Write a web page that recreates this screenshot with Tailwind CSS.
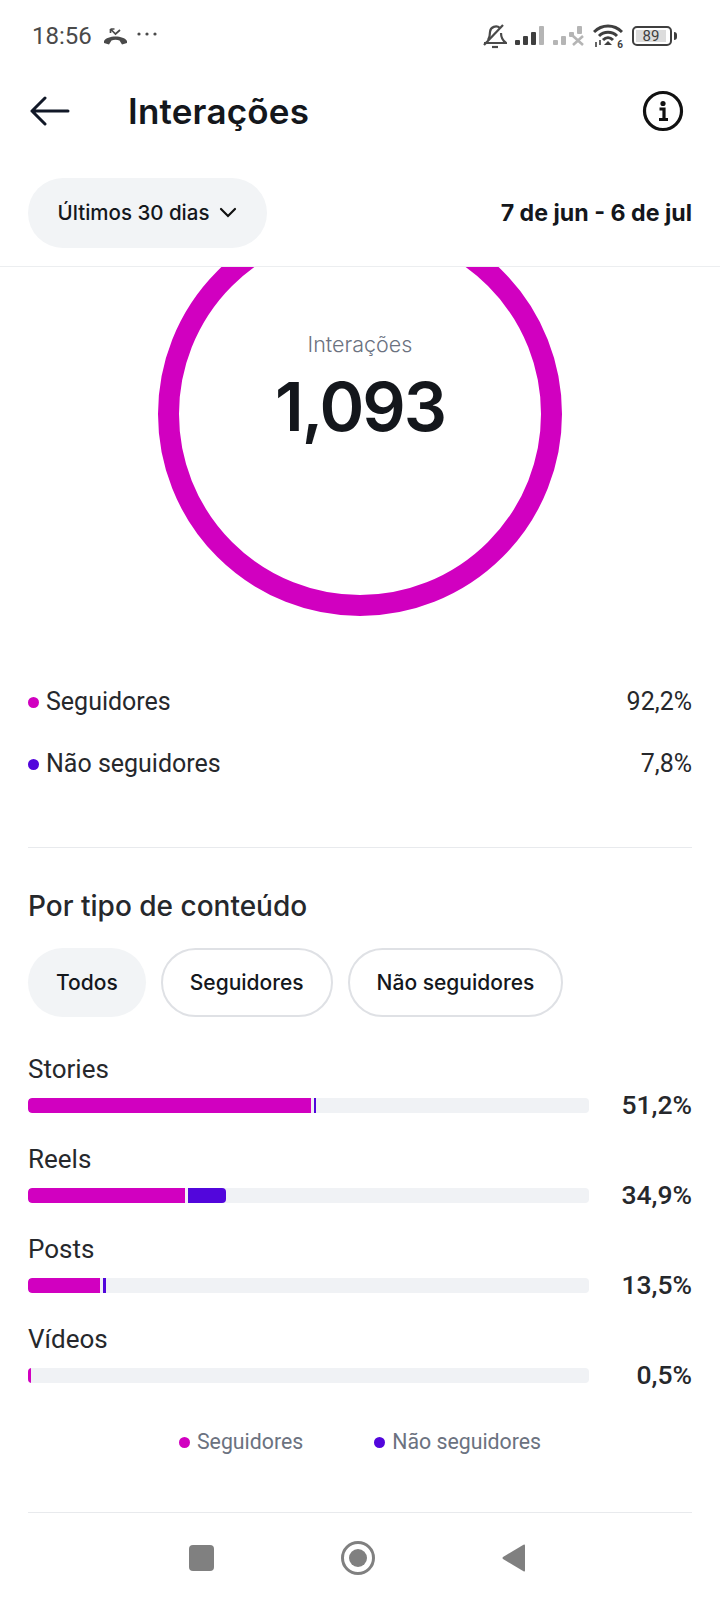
<!DOCTYPE html>
<html lang="en">
  <head>
    <meta charset="UTF-8">
    <title>Interações</title>
    <meta name="viewport" content="width=device-width, initial-scale=1.0">
    <script src="https://cdn.jsdelivr.net/npm/@tailwindcss/browser@4"></script>
  </head>
  <body class="bg-white">
    <div class="w-[720px] h-[1600px] overflow-hidden flex flex-col font-['Roboto',sans-serif] text-[#26282c]">
      <!-- status bar -->
      <div class="h-[72px] shrink-0 flex items-center justify-between pl-8 pr-[43px] text-[#4a4a4a]">
        <div class="flex items-center">
          <span class="text-[24px] leading-none">18:56</span>
          <svg class="ml-[12px]" width="23" height="17" viewBox="0 0 23 17" fill="#4a4a4a"><path d="M0 13C3 7 20 7 23 13L23 15 18 16.500 15.500 12.500C13 11.500 10 11.500 7.500 12.500L5 16.500 0 15Z"/><path d="M6.500 1L11.500 6 16 2M6.500 1V5M6.500 1H10.500" fill="none" stroke="#4a4a4a" stroke-width="1.700"/></svg>
          <svg class="ml-[10px] -mt-1" width="20" height="4" viewBox="0 0 20 4" fill="#4a4a4a"><circle cx="2" cy="2" r="1.600"/><circle cx="10" cy="2" r="1.600"/><circle cx="18" cy="2" r="1.600"/></svg>
        </div>
        <div class="flex items-center gap-[8px]">
          <svg width="24" height="26" viewBox="0 0 24 26" fill="none" stroke="#4a4a4a" stroke-width="2.200"><path d="M5 17C7 14 7 12 7 9A6 6 0 0 1 17 5M18 10C18 14 19 17 23 20H1"/><path d="M1 22L20 2"/><path d="M9 24h6"/></svg>
          <svg width="30" height="20" viewBox="0 0 30 20" fill="#3f3f3f"><rect x="0" y="14" width="5" height="5" rx="1"/><rect x="8" y="10" width="5" height="9" rx="1"/><rect x="16" y="6" width="5" height="13" rx="1"/><rect x="24" y="0" width="5" height="19" rx="1" fill="#b5b5b5"/></svg>
          <svg width="32" height="20" viewBox="0 0 32 20" fill="#b5b5b5"><rect x="0" y="14" width="5" height="5" rx="1"/><rect x="8" y="10" width="5" height="9" rx="1"/><rect x="16" y="6" width="5" height="5" rx="1"/><rect x="24" y="0" width="5" height="8" rx="1"/><path d="M20 10l10 9M30 10l-10 9" stroke="#b5b5b5" stroke-width="2.600"/></svg>
          <div class="relative w-[30px] h-[24px]">
            <svg width="30" height="24" viewBox="0 0 30 24" fill="none" stroke="#3f3f3f" stroke-width="3"><path d="M1 8C9 0 21 0 29 8M6 12C11 7 19 7 24 12M10 16C13 13 17 13 20 16"/><path d="M15 17l4 4h-8z" fill="#3f3f3f" stroke="none"/><path d="M3 18v5M7 16v5" stroke-width="1.600"/></svg>
            <span class="absolute right-0 bottom-[-2px] text-[10px] leading-none font-bold text-[#3f3f3f]">6</span>
          </div>
          <div class="flex items-center ml-[1px]">
            <div class="w-[40px] h-[20px] border-2 border-[#3f3f3f] rounded-[5px] p-[2px]">
              <div class="bg-[#dcdcdc] h-full w-[30px] flex items-center justify-center text-[15px] leading-none text-[#3f3f3f]">89</div>
            </div>
            <div class="w-[3px] h-[8px] bg-[#3f3f3f] ml-[2px] rounded-r-sm"></div>
          </div>
        </div>
      </div>
      <!-- header -->
      <div class="h-[78px] shrink-0 flex items-center justify-between pl-[30px] pr-[36px]">
        <div class="flex items-center">
          <svg width="40" height="30" viewBox="0 0 40 30" fill="none" stroke="#111827" stroke-width="3" stroke-linecap="round" stroke-linejoin="round"><path d="M2 15h36M15 2L2 15l13 13"/></svg>
          <h1 class="ml-[58px] text-[35px] tracking-[0.2px] font-semibold font-['Inter',sans-serif] leading-none text-[#14171c]">Interações</h1>
        </div>
        <svg width="42" height="42" viewBox="0 0 42 42" fill="none"><circle cx="21" cy="21" r="18.500" stroke="#111" stroke-width="3.200"/><circle cx="21" cy="13.500" r="2.600" fill="#111"/><path d="M17.500 19h4.500v10M17 29.500h9" stroke="#111" stroke-width="3.200"/></svg>
      </div>
      <!-- date filter -->
      <div class="h-[117px] shrink-0 flex items-start justify-between px-7 pt-[28px] border-b border-[#eceef0]">
        <button class="h-[70px] w-[239px] rounded-full bg-[#f2f4f6] flex items-center justify-center gap-[10px] text-[20.500px] font-['Inter',sans-serif] font-medium text-[#14171c]">
          <span>Últimos 30 dias</span>
          <svg width="18" height="12" viewBox="0 0 18 12" fill="none" stroke="#111" stroke-width="2.200" stroke-linecap="round"><path d="M2 2l7 7 7-7"/></svg>
        </button>
        <span class="mt-[21px] text-[23.200px] font-bold font-['Inter',sans-serif] leading-[28px] text-[#14171c]">7 de jun - 6 de jul</span>
      </div>
      <!-- donut -->
      <div class="relative h-[350px] shrink-0">
        <svg width="720" height="350" viewBox="0 267 720 350" fill="none"><circle cx="360" cy="414" r="191.500" stroke="#d100c0" stroke-width="21"/></svg>
        <div class="absolute inset-x-0 top-[62px] flex flex-col items-center">
          <span class="text-[21.500px] leading-[30px] font-['Inter',sans-serif] font-light text-[#6b7280]">Interações</span>
          <span class="mt-[7px] text-[68px] tracking-[-2px] leading-[80px] font-semibold font-['Inter',sans-serif] text-[#14171c]">1,093</span>
        </div>
      </div>
      <!-- followers split -->
      <div class="mx-7 pt-[54px] h-[231px] border-b border-[#e8eaed] shrink-0 text-[25px]">
        <div class="flex items-center justify-between h-[62px]">
          <div class="flex items-center gap-[7px]"><span class="w-[11px] h-[11px] rounded-full bg-[#d100c0]"></span>Seguidores</div>
          <span>92,2%</span>
        </div>
        <div class="flex items-center justify-between h-[62px]">
          <div class="flex items-center gap-[7px]"><span class="w-[11px] h-[11px] rounded-full bg-[#5206dc]"></span>Não seguidores</div>
          <span>7,8%</span>
        </div>
      </div>
      <!-- content type -->
      <div class="mx-7 shrink-0 h-[665px] flex flex-col border-b border-[#e8eaed]">
        <h2 class="mt-[40px] text-[28px] leading-[36px] font-medium font-['Inter',sans-serif]">Por tipo de conteúdo</h2>
        <div class="flex gap-[15px] mt-[24px] text-[21px] font-medium font-['Inter',sans-serif] text-[#14171c]">
          <button class="h-[69px] px-[28px] rounded-full bg-[#f2f4f6]">Todos</button>
          <button class="h-[69px] px-[27px] rounded-full border-2 border-[#dfe1e5]">Seguidores</button>
          <button class="h-[69px] px-[27px] rounded-full border-2 border-[#dfe1e5]">Não seguidores</button>
        </div>
        <div class="mt-[36px] flex flex-col gap-[26px]">
          <div class="h-[64px]">
            <div class="text-[26px] leading-[32px]">Stories</div>
            <div class="flex items-start justify-between">
              <div class="w-[561px] h-[15px] mt-[13px] rounded-[4px] bg-[#f0f2f5] flex overflow-hidden">
                <div class="w-[283px] bg-[#d100c0] rounded-l-[4px]"></div>
                <div class="w-[2px] ml-[3px] bg-[#5206dc]"></div>
              </div>
              <span class="pt-[4px] text-[26.500px] leading-[32px] font-medium">51,2%</span>
            </div>
          </div>
          <div class="h-[64px]">
            <div class="text-[26px] leading-[32px]">Reels</div>
            <div class="flex items-start justify-between">
              <div class="w-[561px] h-[15px] mt-[13px] rounded-[4px] bg-[#f0f2f5] flex overflow-hidden">
                <div class="w-[157px] bg-[#d100c0] rounded-l-[4px]"></div>
                <div class="w-[38px] ml-[3px] bg-[#5206dc] rounded-r-[4px]"></div>
              </div>
              <span class="pt-[4px] text-[26.500px] leading-[32px] font-medium">34,9%</span>
            </div>
          </div>
          <div class="h-[64px]">
            <div class="text-[26px] leading-[32px]">Posts</div>
            <div class="flex items-start justify-between">
              <div class="w-[561px] h-[15px] mt-[13px] rounded-[4px] bg-[#f0f2f5] flex overflow-hidden">
                <div class="w-[72px] bg-[#d100c0] rounded-l-[4px]"></div>
                <div class="w-[3px] ml-[3px] bg-[#5206dc]"></div>
              </div>
              <span class="pt-[4px] text-[26.500px] leading-[32px] font-medium">13,5%</span>
            </div>
          </div>
          <div class="h-[64px]">
            <div class="text-[26px] leading-[32px]">Vídeos</div>
            <div class="flex items-start justify-between">
              <div class="w-[561px] h-[15px] mt-[13px] rounded-[4px] bg-[#f0f2f5] flex overflow-hidden">
                <div class="w-[3px] bg-[#d100c0]"></div>
              </div>
              <span class="pt-[4px] text-[26.500px] leading-[32px] font-medium">0,5%</span>
            </div>
          </div>
        </div>
        <div class="mt-[41px] flex justify-center gap-[71px] text-[21.300px] text-[#6b7280] leading-[28px]">
          <div class="flex items-center gap-[7px]"><span class="w-[11px] h-[11px] rounded-full bg-[#d100c0]"></span>Seguidores</div>
          <div class="flex items-center gap-[7px]"><span class="w-[11px] h-[11px] rounded-full bg-[#5206dc]"></span>Não seguidores</div>
        </div>
      </div>
      <!-- nav -->
      <div class="h-[87px] shrink-0 flex items-center justify-center gap-[127px] pr-[5px] pt-[3px]">
        <div class="w-[25px] h-[26px] rounded-[4px] bg-[#808080]"></div>
        <svg width="34" height="34" viewBox="0 0 34 34"><circle cx="17" cy="17" r="15.500" fill="none" stroke="#808080" stroke-width="3"/><circle cx="17" cy="17" r="9" fill="#808080"/></svg>
        <svg width="24" height="28" viewBox="0 0 24 28" fill="#808080"><path d="M23 1.500V26.500Q23 28 21.500 27.200L1 15Q0 14 1 13L21.500.8Q23 0 23 1.500Z"/></svg>
      </div>
    </div>
  </body>
</html>
